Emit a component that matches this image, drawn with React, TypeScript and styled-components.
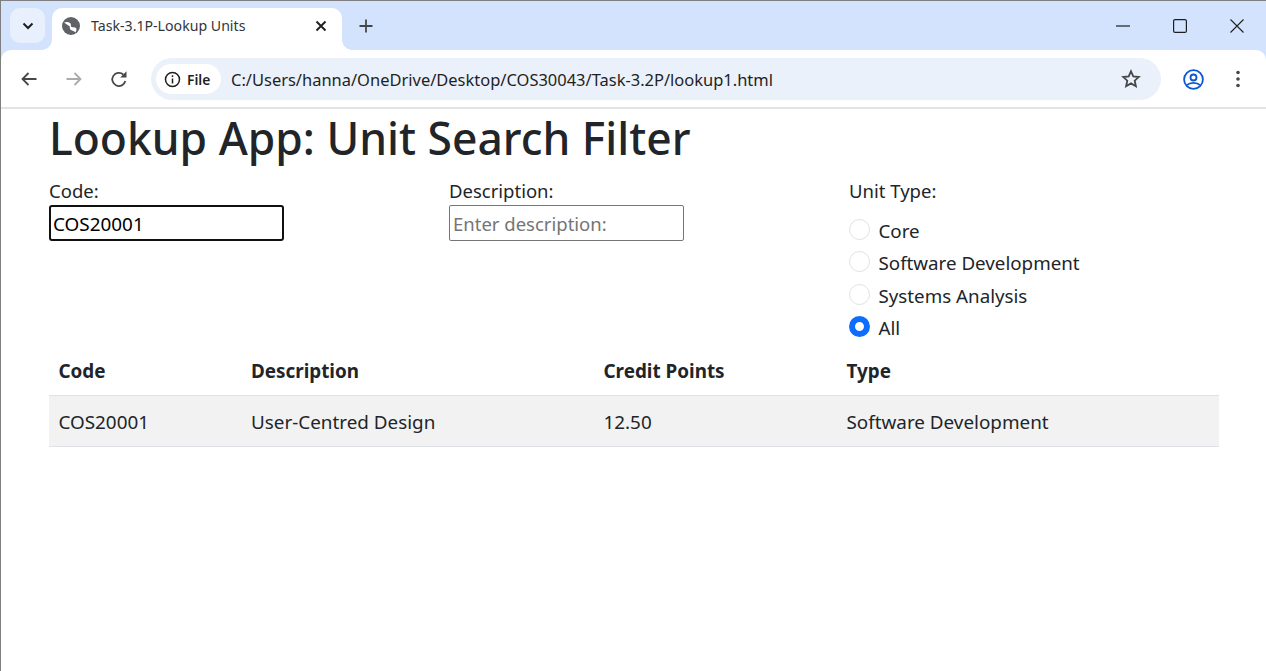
import * as React from 'react';
import styled, { createGlobalStyle } from 'styled-components';

const GlobalStyle = createGlobalStyle`
  html, body { margin: 0; padding: 0; height: 100%; background: #fff; overflow: hidden; }
  #root { height: 100%; }
  * { box-sizing: border-box; }
`;

const Window = styled.div`
  height: 671px;
  width: 1266px;
  display: flex;
  flex-direction: column;
  border-top: 1px solid #7f7f7f;
  border-left: 1px solid #7f7f7f;
  font-family: 'Noto Sans', 'Open Sans', sans-serif;
  color: #212529;
  background: #d3e3fd;
`;

const TabStrip = styled.div`
  height: 49px;
  display: flex;
  align-items: flex-start;
  padding: 7px 0 0 9px;
  flex-shrink: 0;
`;

const TabSearch = styled.div`
  width: 35px;
  height: 35px;
  border-radius: 10px;
  background: #e9f0fd;
  display: flex;
  align-items: center;
  justify-content: center;
  margin-right: 7px;
`;

const Tab = styled.div`
  width: 290px;
  height: 42px;
  background: #fff;
  border-radius: 10px 10px 0 0;
  display: flex;
  align-items: center;
  padding: 0 15px 7px 10px;
  position: relative;
  &::before, &::after {
    content: '';
    position: absolute;
    bottom: 0;
    width: 10px;
    height: 10px;
    background: radial-gradient(circle at var(--cx) 0, #d3e3fd 9.5px, #fff 10px);
  }
  &::before { left: -10px; --cx: 0; }
  &::after { right: -10px; --cx: 100%; }
`;

const TabTitle = styled.span`
  flex: 1;
  margin-left: 11px;
  font-size: 14.15px;
  color: #333639;
  white-space: nowrap;
`;

const NewTab = styled.div`
  width: 28px;
  height: 28px;
  margin: 4px 0 0 10px;
  display: flex;
  align-items: center;
  justify-content: center;
`;

const WindowControls = styled.div`
  margin-left: auto;
  display: flex;
  margin-top: 3px;
  margin-right: 1px;
`;

const WindowButton = styled.div`
  width: 57px;
  height: 30px;
  display: flex;
  align-items: center;
  justify-content: center;
`;

const Toolbar = styled.div`
  height: 59px;
  background: #fff;
  border-radius: 10px 10px 0 0;
  border-bottom: 2px solid #e1e3e6;
  display: flex;
  align-items: center;
  padding: 1px 0 0 16px;
  flex-shrink: 0;
`;

const NavButton = styled.div`
  width: 24px;
  height: 24px;
  margin-right: 21px;
  display: flex;
  align-items: center;
  justify-content: center;
`;

const Omnibox = styled.div`
  width: 1010px;
  height: 42px;
  margin-left: -1px;
  border-radius: 21px;
  background: #ebf1fa;
  display: flex;
  align-items: center;
  padding: 0 20px 0 5px;
`;

const SiteChip = styled.div`
  height: 30px;
  width: 65px;
  border-radius: 15px;
  background: #fff;
  display: flex;
  align-items: center;
  padding-left: 8px;
  gap: 6px;
  font-size: 13.8px;
  font-weight: 600;
  color: #1f1f1f;
`;

const Url = styled.span`
  flex: 1;
  margin-left: 10px;
  font-size: 16.48px;
  color: #1f1f1f;
  white-space: nowrap;
`;

const ProfileGroup = styled.div`
  display: flex;
  align-items: center;
  margin-left: 22px;
  gap: 32px;
`;

const PageArea = styled.div`
  flex: 1;
  background: #fff;
  padding-left: 48px;
`;

const Page = styled.main`
  width: 1170px;
`;

const Heading = styled.h1`
  margin: 0;
  height: 60px;
  font-size: 44.4px;
  line-height: 58px;
  font-weight: 500;
  white-space: nowrap;
`;

const FilterRow = styled.form`
  display: grid;
  grid-template-columns: 400px 400px 1fr;
  height: 172px;
  margin-top: 3px;
`;

const Field = styled.div`
  display: flex;
  flex-direction: column;
  align-items: flex-start;
`;

const FieldLabel = styled.label`
  font-size: 18.5px;
  line-height: 26px;
  height: 27px;
  margin-top: 6px;
`;

const TextBox = styled.input`
  width: 235px;
  height: 36px;
  padding: 0 3px;
  border: 1px solid #767676;
  border-radius: 2px;
  font: inherit;
  font-size: 18.5px;
  color: #000;
  background: #fff;
  outline: none;
  &.focused {
    border: 2px solid #101010;
    border-radius: 3px;
    padding: 1px 2px 0;
    font-size: 18.9px;
  }
  &::placeholder { color: #757575; opacity: 1; }
`;

const RadioList = styled.div`
  margin-top: 9.2px;
  display: flex;
  flex-direction: column;
`;

const RadioRow = styled.label`
  height: 32.4px;
  display: flex;
  align-items: center;
  gap: 8.5px;
  font-size: 18.75px;
`;

const RadioDot = styled.span<{ $checked?: boolean }>`
  width: 21px;
  height: 21px;
  margin-top: -2px;
  border-radius: 50%;
  background: #fff;
  border: ${({ $checked }) => ($checked ? '6px solid #0d6efd' : '1px solid #dee2e6')};
`;

const UnitTable = styled.table`
  width: 100%;
  border-collapse: collapse;
  font-size: 18.85px;
  table-layout: fixed;
  margin-top: 1px;
  td, th {
    padding: 3px 0 0 9.5px;
    text-align: left;
  }
`;

const HeadCell = styled.th`
  height: 50px;
  font-weight: 700;
  border-bottom: 1px solid #dee2e6;
`;

const DataRow = styled.tr`
  background: #f2f2f2;
  td {
    height: 51px;
    border-bottom: 1px solid #dee2e6;
  }
`;

const Ico = styled.svg`
  display: block;
  flex-shrink: 0;
`;

const units = [
  { code: 'COS20001', description: 'User-Centred Design', credit: '12.50', type: 'Software Development' },
];

const radioOptions = [
  { label: 'Core' },
  { label: 'Software Development' },
  { label: 'Systems Analysis' },
  { label: 'All', checked: true },
];

const App = () => {
  return (
    <Window>
      <GlobalStyle />
      <TabStrip>
        <TabSearch>
          <Ico width="12" height="8" viewBox="0 0 12 8" fill="none" stroke="#1f1f1f" strokeWidth="2">
            <path d="M1.5 1.5 6 6l4.5-4.5" />
          </Ico>
        </TabSearch>
        <Tab>
          <Ico width="18" height="18" viewBox="0 0 18 18">
            <circle cx="9" cy="9" r="9" fill="#5f6368" />
            <path d="M2 5.500C4.500 4.500 7.500 5 8.500 6.500c1 1.700-.3 2.500.8 3.300 1.200.8 3.600.2 4.700 1.200 1 1 .4 3-.6 4.500-1.200-1.500-3-1.800-4.400-2.500-1.600-.8-1-2.400-1.200-3.500" fill="#fff" />
          </Ico>
          <TabTitle>Task-3.1P-Lookup Units</TabTitle>
          <Ico width="12" height="12" viewBox="0 0 12 12" fill="none" stroke="#1f1f1f" strokeWidth="1.900">
            <path d="M1.500 1.500l9 9M10.500 1.500l-9 9" />
          </Ico>
        </Tab>
        <NewTab>
          <Ico width="14" height="14" viewBox="0 0 14 14" fill="none" stroke="#444746" strokeWidth="1.800">
            <path d="M7 .5v13M.5 7h13" />
          </Ico>
        </NewTab>
        <WindowControls>
          <WindowButton>
            <Ico width="14" height="2" viewBox="0 0 14 2" stroke="#1f1f1f" strokeWidth="1.200">
              <path d="M0 1h14" />
            </Ico>
          </WindowButton>
          <WindowButton>
            <Ico width="14" height="14" viewBox="0 0 14 14" fill="none" stroke="#1f1f1f" strokeWidth="1.200">
              <rect x=".6" y=".6" width="12.800" height="12.800" rx="1.500" />
            </Ico>
          </WindowButton>
          <WindowButton>
            <Ico width="14" height="14" viewBox="0 0 14 14" fill="none" stroke="#1f1f1f" strokeWidth="1.100">
              <path d="M.5.500l13 13M13.500.500l-13 13" />
            </Ico>
          </WindowButton>
        </WindowControls>
      </TabStrip>

      <Toolbar>
        <NavButton>
          <Ico width="16" height="14" viewBox="0 0 16 14" fill="none" stroke="#474747" strokeWidth="1.800">
            <path d="M15.500 7H1.500M7.500 1l-6 6 6 6" />
          </Ico>
        </NavButton>
        <NavButton>
          <Ico width="16" height="14" viewBox="0 0 16 14" fill="none" stroke="#a9abad" strokeWidth="1.800">
            <path d="M.5 7h14M8.500 1l6 6-6 6" />
          </Ico>
        </NavButton>
        <NavButton>
          <Ico width="18" height="18" viewBox="0 0 18 18">
            <path d="M15.300 11A6.600 6.600 0 1 1 13.300 4.500" fill="none" stroke="#474747" strokeWidth="1.800" />
            <path d="M16.500 1.200v6.300h-6.300z" fill="#474747" />
          </Ico>
        </NavButton>
        <Omnibox>
          <SiteChip>
            <Ico width="17" height="17" viewBox="0 0 17 17" fill="none" stroke="#1f1f1f" strokeWidth="1.500">
              <circle cx="8.500" cy="8.500" r="7" />
              <path d="M8.500 7.500v5M8.500 4.200v1.800" />
            </Ico>
            File
          </SiteChip>
          <Url>C:/Users/hanna/OneDrive/Desktop/COS30043/Task-3.2P/lookup1.html</Url>
          <Ico width="20" height="20" viewBox="0 0 20 20" fill="none" stroke="#474747" strokeWidth="1.800">
            <path d="M10 2.300l2.300 5.100 5.500.6-4.100 3.700 1.200 5.500L10 14.400l-4.900 2.800 1.200-5.500-4.100-3.700 5.500-.6z" />
          </Ico>
        </Omnibox>
        <ProfileGroup>
          <Ico width="21" height="21" viewBox="0 0 21 21" fill="none" stroke="#0b57d0" strokeWidth="1.800">
            <circle cx="10.500" cy="10.500" r="9.400" />
            <circle cx="10.500" cy="8.500" r="3" />
            <path d="M3.800 16.200c1.800-1.700 4.200-2.400 6.700-2.400s4.900.7 6.700 2.400" />
          </Ico>
          <Ico width="4" height="18" viewBox="0 0 4 18" fill="#474747">
            <circle cx="2" cy="2.500" r="1.800" />
            <circle cx="2" cy="9" r="1.800" />
            <circle cx="2" cy="15.500" r="1.800" />
          </Ico>
        </ProfileGroup>
      </Toolbar>

      <PageArea>
        <Page>
          <Heading>Lookup App: Unit Search Filter</Heading>
          <FilterRow>
            <Field>
              <FieldLabel>Code:</FieldLabel>
              <TextBox className="focused" defaultValue="COS20001" />
            </Field>
            <Field>
              <FieldLabel>Description:</FieldLabel>
              <TextBox placeholder="Enter description:" />
            </Field>
            <Field>
              <FieldLabel>Unit Type:</FieldLabel>
              <RadioList>
                {radioOptions.map((opt) => (
                  <RadioRow key={opt.label}>
                    <RadioDot $checked={opt.checked} />
                    {opt.label}
                  </RadioRow>
                ))}
              </RadioList>
            </Field>
          </FilterRow>
          <UnitTable>
            <colgroup>
              <col width="192.500" />
              <col width="352.500" />
              <col width="243" />
              <col />
            </colgroup>
            <thead>
              <tr>
                <HeadCell>Code</HeadCell>
                <HeadCell>Description</HeadCell>
                <HeadCell>Credit Points</HeadCell>
                <HeadCell>Type</HeadCell>
              </tr>
            </thead>
            <tbody>
              {units.map((unit) => (
                <DataRow key={unit.code}>
                  <td>{unit.code}</td>
                  <td>{unit.description}</td>
                  <td>{unit.credit}</td>
                  <td>{unit.type}</td>
                </DataRow>
              ))}
            </tbody>
          </UnitTable>
        </Page>
      </PageArea>
    </Window>
  );
};

export default App;
